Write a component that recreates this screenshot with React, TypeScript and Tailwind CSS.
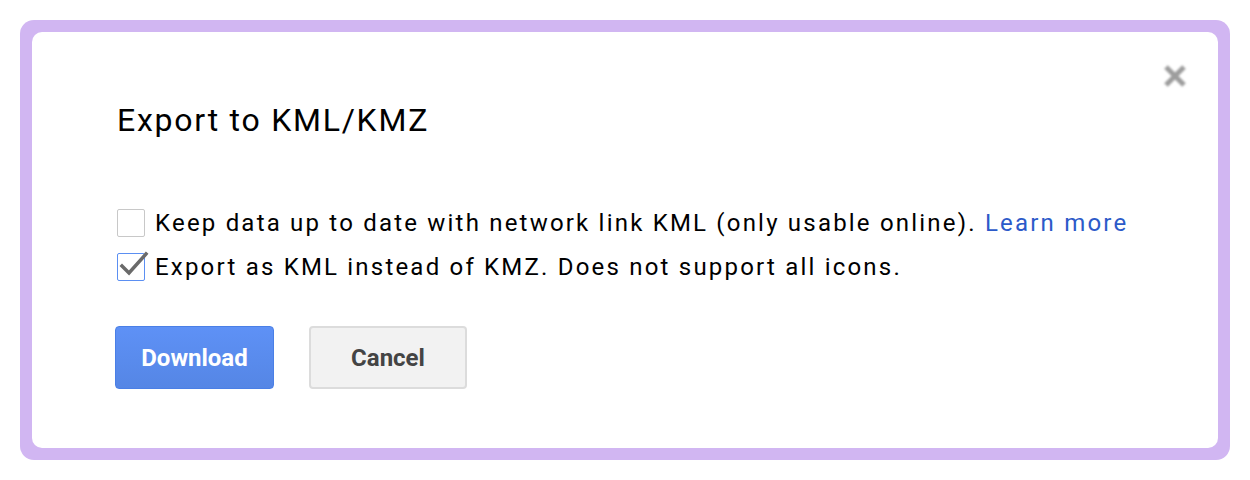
import React, { useState } from "react";

const CheckMark = () => (
  <svg viewBox="0 0 34 34" className="absolute left-0 -top-[6px] w-[34px] h-[34px] overflow-visible">
    <path d="M4 18 L11 25 L28 6" fill="none" stroke="#6a6a6a" strokeWidth="3.5" strokeLinecap="square" strokeLinejoin="miter" />
  </svg>
);

const Option = ({ checked, onToggle, children }: { checked: boolean; onToggle: () => void; children: React.ReactNode }) => (
  <label className="flex items-center h-[44px] cursor-pointer select-none" onClick={onToggle}>
    <span
      className={`relative w-[28px] h-[28px] rounded-[2px] border bg-white shrink-0 ${
        checked ? "border-[#5b8ff2]" : "border-[#c8c8c8]"
      }`}
    >
      {checked && <CheckMark />}
    </span>
    <span className="ml-[10px] text-[24px] leading-[44px] tracking-[2.2px] text-black whitespace-nowrap">{children}</span>
  </label>
);

const App = (): JSX.Element => {
  const [keepUpdated, setKeepUpdated] = useState(false);
  const [asKml, setAsKml] = useState(true);

  return (
    <div className="w-[1250px] h-[480px] bg-white pt-[20px] pl-[20px] font-[Roboto,Arial,sans-serif]">
      <div className="w-[1210px] h-[440px] bg-[#d1b6f2] rounded-[14px] p-[12px]">
        <div className="relative w-full h-full bg-white rounded-[10px] pl-[85px] pt-[68px]">
          {/* close */}
          <button className="absolute right-[31px] top-[32px] w-[24px] h-[24px] blur-[0.8px]" aria-label="Close">
            <svg viewBox="0 0 24 24" className="w-[24px] h-[24px]">
              <path d="M3 3 L21 21 M21 3 L3 21" stroke="#9d9d9d" strokeWidth="5" strokeLinecap="butt" />
            </svg>
          </button>

          <h1 className="text-[32px] leading-[40px] tracking-[1.75px] font-normal text-black">Export to KML/KMZ</h1>

          <div className="mt-[61px] flex flex-col">
            <Option checked={keepUpdated} onToggle={() => setKeepUpdated(!keepUpdated)}>
              Keep data up to date with network link KML (only usable online).{" "}
              <a className="text-[#2c5ac9]">Learn more</a>
            </Option>
            <Option checked={asKml} onToggle={() => setAsKml(!asKml)}>
              Export as KML instead of KMZ. Does not support all icons.
            </Option>
          </div>

          <div className="mt-[37px] -ml-[2px] flex gap-[35px]">
            <button className="w-[159px] h-[63px] rounded-[4px] border border-[#4a7fe6] bg-gradient-to-b from-[#5e91f6] to-[#5586e5] text-white text-[24px] font-bold">
              Download
            </button>
            <button className="w-[158px] h-[63px] rounded-[4px] border-2 border-[#dcdcdc] bg-[#f2f2f2] text-[#444] text-[24px] font-bold">
              Cancel
            </button>
          </div>
        </div>
      </div>
    </div>
  );
};

export default App;
